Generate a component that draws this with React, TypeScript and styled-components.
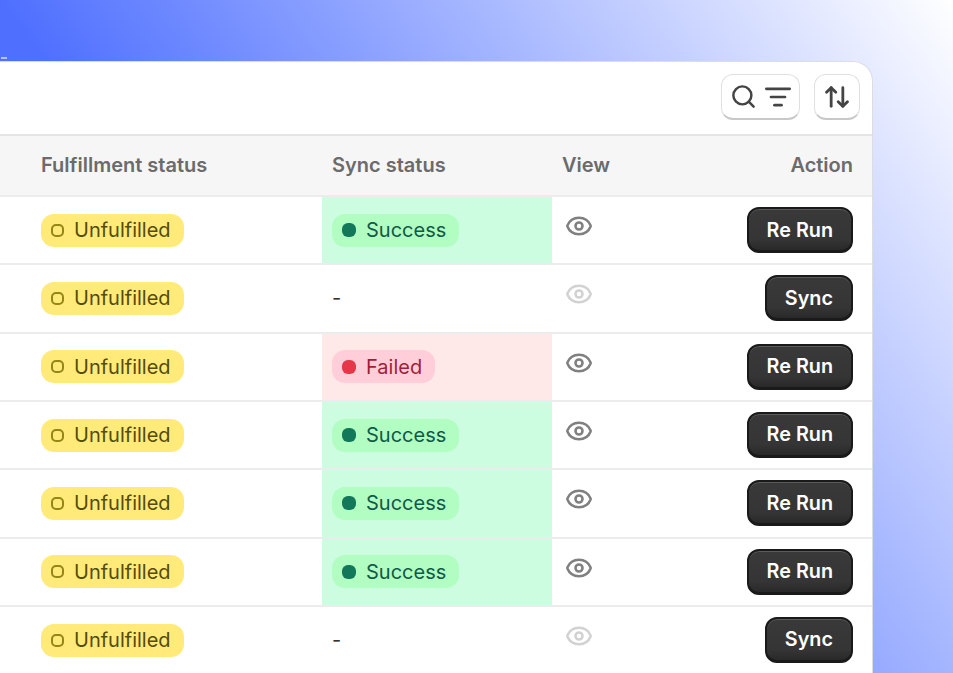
import { FC } from 'react';
import styled, { createGlobalStyle } from 'styled-components';
import { ArrowUpDown, Eye, ListFilter, Search } from 'lucide-react';

type SyncState = 'success' | 'failed' | null;

const syncColors = {
  success: { cell: '#ccfde0', badge: '#b2fdc2', text: '#0e5a47', dot: '#13785a' },
  failed: { cell: '#ffe8e8', badge: '#ffced8', text: '#a11d3a', dot: '#e5364a' },
};

const rows: { sync: SyncState; action: string }[] = [
  { sync: 'success', action: 'Re Run' },
  { sync: null, action: 'Sync' },
  { sync: 'failed', action: 'Re Run' },
  { sync: 'success', action: 'Re Run' },
  { sync: 'success', action: 'Re Run' },
  { sync: 'success', action: 'Re Run' },
  { sync: null, action: 'Sync' },
];

const GlobalStyle = createGlobalStyle`
  html, body {
    margin: 0;
    height: 100%;
    overflow: hidden;
  }
  body {
    font-family: Inter, "Liberation Sans", sans-serif;
  }
`;

const Page = styled.div`
  position: relative;
  width: 953px;
  height: 673px;
  box-sizing: border-box;
  padding-top: 61px;
  overflow: hidden;
  background: linear-gradient(54deg, #4f70ff 34%, #ffffff 100%);
`;

const Speck = styled.div`
  position: absolute;
  left: 1px;
  top: 57px;
  width: 6px;
  height: 2px;
  background: #b4c2ff;
`;

const Card = styled.div`
  width: 873px;
  height: 660px;
  box-sizing: border-box;
  background: #fff;
  border: 1px solid #dcdde3;
  border-left: 0;
  border-top-right-radius: 20px;
  overflow: hidden;
`;

const Toolbar = styled.div`
  height: 74px;
  box-sizing: border-box;
  padding: 12px 12px 0 0;
  display: flex;
  justify-content: flex-end;
  gap: 14px;
  border-bottom: 2px solid #e4e4e4;
`;

const ToolButton = styled.div<{ $wide?: boolean }>`
  width: ${({ $wide }) => ($wide ? '79px' : '46px')};
  height: 46px;
  box-sizing: border-box;
  display: flex;
  align-items: center;
  justify-content: center;
  gap: 7px;
  color: #444;
  background: #fff;
  border: 1px solid #e0e0e0;
  border-bottom: 2px solid #c8c8c8;
  border-radius: 12px;
`;

const Row = styled.div<{ $header?: boolean }>`
  display: grid;
  grid-template-columns: 322px 230px 1fr auto;
  height: ${({ $header }) => ($header ? '61px' : '68.33px')};
  box-sizing: border-box;
  padding-bottom: ${({ $header }) => ($header ? '1px' : '0')};
  background: ${({ $header }) => ($header ? '#f6f6f6' : '#fff')};
  border-bottom: 2px solid #ececec;
`;

const Cell = styled.div<{ $bg?: string }>`
  padding-left: 41px;
  display: flex;
  align-items: center;
  background: ${({ $bg }) => $bg || 'transparent'};
`;

const SyncCell = styled(Cell)`
  padding-left: 10px;
  font-size: 20px;
  color: #333;
`;

const ViewCell = styled.div`
  padding: 15px 0 0 13px;
`;

const HeaderText = styled.div<{ $left?: number; $right?: number }>`
  padding-left: ${({ $left }) => $left ?? 0}px;
  padding-right: ${({ $right }) => $right ?? 0}px;
  display: flex;
  align-items: center;
  font-size: 20px;
  font-weight: 600;
  color: #6b6b6b;
`;

const Badge = styled.div<{ $bg: string; $color: string }>`
  height: 33px;
  box-sizing: border-box;
  padding: 0 13px 0 10px;
  display: inline-flex;
  align-items: center;
  gap: 10px;
  font-size: 20px;
  border-radius: 13px;
  background: ${({ $bg }) => $bg};
  color: ${({ $color }) => $color};
`;

const Ring = styled.span`
  width: 13px;
  height: 13px;
  box-sizing: border-box;
  border: 2.5px solid #958618;
  border-radius: 5px;
`;

const Dot = styled.span<{ $color: string }>`
  width: 14px;
  height: 14px;
  border-radius: 6px;
  background: ${({ $color }) => $color};
`;

const ViewIcon = styled(Eye)<{ $off: boolean }>`
  display: block;
  color: ${({ $off }) => ($off ? '#d2d2d2' : '#808080')};
`;

const ActionCell = styled.div`
  padding: 10px 19px 0 0;
`;

const ActionButton = styled.div`
  height: 46px;
  box-sizing: border-box;
  padding: 0 18px;
  display: flex;
  align-items: center;
  font-size: 19.8px;
  font-weight: 600;
  color: #fff;
  border-radius: 12px;
  border: 2px solid #1a1a1a;
  border-bottom-width: 3px;
  background: linear-gradient(#393939 0%, #353535 74%, #292929 100%);
  box-shadow: inset 0 1px 0 #5a5a5a;
`;

const TableRow: FC<{ sync: SyncState; action: string }> = ({ sync, action }) => {
  const colors = sync ? syncColors[sync] : null;

  return (
    <Row>
      <Cell>
        <Badge $bg="#ffea7a" $color="#544c08">
          <Ring />
          Unfulfilled
        </Badge>
      </Cell>
      <SyncCell $bg={colors?.cell}>
        {colors ? (
          <Badge $bg={colors.badge} $color={colors.text}>
            <Dot $color={colors.dot} />
            {sync === 'success' ? 'Success' : 'Failed'}
          </Badge>
        ) : (
          '-'
        )}
      </SyncCell>
      <ViewCell>
        <ViewIcon $off={!sync} size={28} strokeWidth={2.2} />
      </ViewCell>
      <ActionCell>
        <ActionButton>{action}</ActionButton>
      </ActionCell>
    </Row>
  );
};

const App: FC = () => (
  <Page>
    <GlobalStyle />
    <Speck />
    <Card>
      <Toolbar>
        <ToolButton $wide>
          <Search size={27} strokeWidth={2.2} />
          <ListFilter size={28} strokeWidth={2.3} />
        </ToolButton>
        <ToolButton>
          <ArrowUpDown size={28} strokeWidth={2.4} />
        </ToolButton>
      </Toolbar>
      <Row $header>
        <HeaderText $left={41}>Fulfillment status</HeaderText>
        <HeaderText $left={10}>Sync status</HeaderText>
        <HeaderText $left={10}>View</HeaderText>
        <HeaderText $right={19}>Action</HeaderText>
      </Row>
      {rows.map((row, index) => (
        <TableRow key={index} sync={row.sync} action={row.action} />
      ))}
    </Card>
  </Page>
);

export default App;
